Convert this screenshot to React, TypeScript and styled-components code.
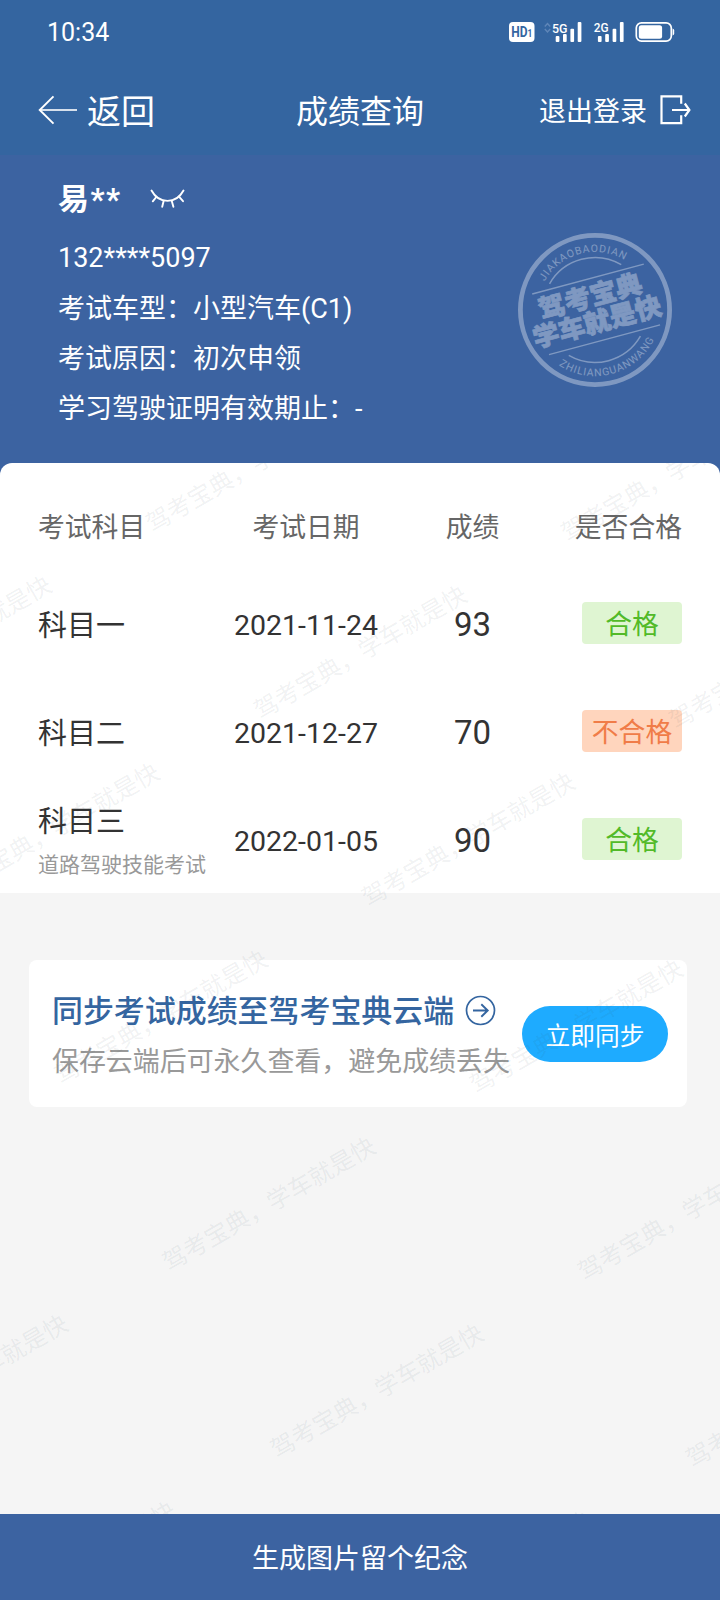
import React from "react";
import styled, { createGlobalStyle } from "styled-components";

const GlobalStyle = createGlobalStyle`
  * { box-sizing: border-box; }
  body {
    margin: 0;
    background: #f5f5f5;
    font-family: Roboto, "Noto Sans CJK SC", sans-serif;
  }
`;

const Screen = styled.div`
  width: 720px;
  height: 1600px;
  display: flex;
  flex-direction: column;
  overflow: hidden;
  background: #f5f5f5;
`;

const TopBar = styled.header`
  height: 155px;
  flex: none;
  background: #3465a0;
  color: #fff;
`;

const StatusBar = styled.div`
  height: 64px;
  padding: 0 45px 0 47px;
  display: flex;
  align-items: center;
  justify-content: space-between;
`;

const Clock = styled.span`
  padding-top: 1px;
  font-size: 25px;
  line-height: 31px;
`;

const NavBar = styled.nav`
  height: 92px;
  padding: 0 29px 0 38px;
  display: grid;
  grid-template-columns: 1fr auto 1fr;
  align-items: center;
`;

const NavAction = styled.div<{ $end?: boolean; $size: number; $gap: number }>`
  display: flex;
  align-items: center;
  justify-content: ${(p) => (p.$end ? "flex-end" : "flex-start")};
  gap: ${(p) => p.$gap}px;
  font-size: ${(p) => p.$size}px;
  line-height: 40px;

  svg { margin-bottom: 1px; }
`;

const NavLabel = styled.span`
  padding-top: 3px;
`;

const NavTitle = styled.h1`
  margin: 0 0 0 -9px;
  padding-top: 4px;
  font-size: 32px;
  font-weight: 400;
  line-height: 40px;
`;

const Hero = styled.section`
  height: 308px;
  flex: none;
  display: flex;
  justify-content: space-between;
  padding: 10px 48px 0 58px;
  background: #3c63a1;
  color: #fff;
`;

const NameRow = styled.div`
  height: 68px;
  display: flex;
  align-items: center;
  gap: 28px;

  svg { margin-bottom: 1px; }
`;

const Name = styled.span`
  font-size: 31px;
  font-weight: 700;
  line-height: 41px;
  letter-spacing: 1.5px;
`;

const Phone = styled.div`
  height: 51px;
  font-size: 27px;
  line-height: 50px;
`;

const InfoLine = styled.div`
  height: 50px;
  font-size: 27px;
  line-height: 50px;
  white-space: nowrap;
`;

const StampSvg = styled.svg`
  flex: none;
  margin-top: 68px;
`;

const Body = styled.main`
  position: relative;
  flex: 1;
  overflow: hidden;
  background: linear-gradient(#3c63a1 0 20px, #f5f5f5 20px);
`;

const ScoreCard = styled.section`
  height: 430px;
  padding: 21px 38px 0;
  border-radius: 12px 12px 0 0;
  background: #fff;
`;

const Row = styled.div<{ $head?: boolean }>`
  height: ${(p) => (p.$head ? 87 : 108)}px;
  display: grid;
  grid-template-columns: 168px 200px 133px 143px;
  align-items: center;
  justify-items: center;
  color: ${(p) => (p.$head ? "#666" : "#333")};
  font-size: ${(p) => (p.$head ? 26.8 : 29)}px;
  line-height: 40px;
  white-space: nowrap;

  > :first-child { justify-self: start; }
  > :last-child { justify-self: end; }
`;

const Subject = styled.div<{ $noted: boolean }>`
  display: flex;
  flex-direction: column;
  gap: 3px;
  padding-top: ${(p) => (p.$noted ? 4 : 2)}px;
`;

const SubjectNote = styled.span`
  color: #999;
  font-size: 21px;
`;

const ExamDate = styled.span`
  padding-top: 1px;
  font-size: 28.5px;
`;

const Score = styled.span`
  font-size: 33px;
`;

const Badge = styled.span<{ $pass: boolean }>`
  width: 100px;
  height: 42px;
  margin-bottom: 4px;
  border-radius: 4px;
  text-align: center;
  font-size: 26.8px;
  line-height: 46px;
  background: ${(p) => (p.$pass ? "#dff5d2" : "#ffd5bd")};
  color: ${(p) => (p.$pass ? "#52ba28" : "#f07c48")};
`;

const SyncCard = styled.section`
  width: 658px;
  height: 147px;
  margin: 67px 0 0 29px;
  padding: 0 19px 0 23px;
  display: flex;
  align-items: center;
  justify-content: space-between;
  border-radius: 8px;
  background: #fff;
  white-space: nowrap;
`;

const SyncText = styled.div`
  padding-top: 6px;
`;

const SyncTitle = styled.div`
  display: flex;
  align-items: center;
  gap: 11px;
  color: #3465a0;
  font-size: 30.95px;
  font-weight: 500;
  line-height: 50px;

  svg { margin-bottom: 2px; }
`;

const SyncNote = styled.div`
  color: #999;
  font-size: 26.95px;
  line-height: 50px;
`;

const SyncButton = styled.button`
  width: 146px;
  height: 56px;
  flex: none;
  padding: 0;
  border: 0;
  border-radius: 28px;
  background: #1eabff;
  color: #fff;
  font: 24.7px/62px Roboto, "Noto Sans CJK SC", sans-serif;
`;

const WatermarkLayer = styled.div`
  position: absolute;
  inset: 0;
  overflow: hidden;
  pointer-events: none;
`;

const WatermarkGrid = styled.div`
  position: absolute;
  top: 2px;
  left: 2px;
  display: grid;
  grid-template-columns: repeat(4, 355px);
  grid-auto-rows: 216px;
  transform-origin: 0 0;
  transform: rotate(-30deg) translate(-614px, -102px);
  color: rgba(50, 75, 85, 0.08);
  font-size: 24.1px;
  line-height: 24px;
  white-space: nowrap;
`;

const BottomBar = styled.footer`
  height: 86px;
  flex: none;
  background: #3c63a1;
  color: #fff;
  text-align: center;
  font-size: 27px;
  line-height: 90px;
`;

const SignalBars = ({ x }: { x: number }) => (
  <g>
    <rect x={x} y="36" width="3.7" height="6" rx="1" />
    <rect x={x + 7.3} y="34" width="3.7" height="8" rx="1" />
    <rect x={x + 14.7} y="28.7" width="3.7" height="13.3" rx="1" />
    <rect x={x + 22} y="22" width="3.7" height="20" rx="1" />
  </g>
);

const StatusIcons = () => (
  <svg width="167" height="24" viewBox="508 20 167 24" fill="#fff" fontFamily="Roboto, sans-serif">
    <rect x="509" y="22" width="25.5" height="20" rx="4" />
    <text x="511.2" y="37.2" fill="#3465a0" fontWeight="700" fontSize="14.5" textLength="21" lengthAdjust="spacingAndGlyphs">
      HD<tspan fontSize="10">1</tspan>
    </text>
    <path d="M544.8 26.5l2.7-3 2.7 3M544.8 29l2.7 3 2.7-3" fill="none" stroke="#5f86b8" strokeWidth="1.4" />
    <text x="552" y="32.8" fontSize="13" fontWeight="500" textLength="15.5" lengthAdjust="spacingAndGlyphs">5G</text>
    <SignalBars x={555.7} />
    <text x="593.8" y="32.3" fontSize="12.5" fontWeight="500" textLength="14.8" lengthAdjust="spacingAndGlyphs">2G</text>
    <SignalBars x={597.9} />
    <rect x="636.3" y="22.8" width="35" height="18.4" rx="5.2" fill="none" stroke="#fff" strokeWidth="1.7" />
    <rect x="638.8" y="25.3" width="23.3" height="13.4" rx="2.5" />
    <path d="M672.6 28.5q1.6.3 1.6 2v3q0 1.7-1.6 2z" />
  </svg>
);

const BackArrow = () => (
  <svg width="40" height="32" viewBox="38 93 40 32" fill="none" stroke="#fff" strokeWidth="1.9">
    <path d="M53.5 95.3L39.7 109l13.8 13.7" />
    <path d="M40 109h37" opacity="0.8" />
  </svg>
);

const ExitIcon = () => (
  <svg width="32" height="32" viewBox="659 93 32 32" fill="none" stroke="#fff" strokeWidth="2.2">
    <path d="M681.2 102.8v-7.5h-19.7v26.9h19.7v-8" />
    <path d="M672 109h17.5M684.8 102.5l4.6 6.5-4.6 6.5" />
  </svg>
);

const ClosedEye = () => (
  <svg width="36" height="22" viewBox="150 187 36 22" fill="none" stroke="#fff" strokeWidth="1.9" strokeLinecap="round">
    <path d="M151.5 189.5C159 203.3 176 203.3 183.5 189.5" />
    <path d="M156.3 196l-3.5 4.3M163.7 199.8l-1.5 6M171.7 199.8l1.7 6M179 195.7l4 4.5" />
  </svg>
);

const CircleArrow = () => (
  <svg width="31" height="31" viewBox="0 0 31 31" fill="none" stroke="#3465a0" strokeWidth="1.7">
    <circle cx="15.5" cy="15.5" r="14" />
    <path d="M8 15.5h14.500M16.300 9.300l6.400 6.200-6.400 6.200" strokeWidth="1.9" />
  </svg>
);

const Stamp = () => (
  <StampSvg width="154" height="154" viewBox="-77 -77 154 154" opacity="0.34">
    <defs>
      <path id="arc-top" d="M-53.6-22.2A58 58 0 0 1 53.6-22.2" />
      <path id="arc-bottom" d="M-61 25.3A66 66 0 0 0 61 25.3" />
    </defs>
    <circle r="74.6" fill="none" stroke="#fff" strokeWidth="4.8" />
    <g transform="rotate(-15)" fill="#fff">
      <g fill="none" stroke="#fff" strokeWidth="1.5">
        <path d="M-37.1-37.1A52.5 52.5 0 0 1 37.1-37.1M-37.1 37.1A52.5 52.5 0 0 0 37.1 37.1" />
        <path d="M-56.5-31.7h115.5M-56 31.2h115" />
      </g>
      <g fontFamily="Noto Sans CJK SC, sans-serif" fontWeight="900" fontSize="26" stroke="#fff" strokeWidth="0.7">
        <text x="-54" y="-5" textLength="106" lengthAdjust="spacingAndGlyphs">驾考宝典</text>
        <text x="-67" y="21.5" textLength="132" lengthAdjust="spacingAndGlyphs">学车就是快</text>
      </g>
      <g fontFamily="Roboto, sans-serif" fontSize="10.5" textAnchor="middle">
        <text textLength="92"><textPath href="#arc-top" startOffset="50%">JIAKAOBAODIAN</textPath></text>
        <text textLength="111"><textPath href="#arc-bottom" startOffset="50%">ZHILIANGUANWANG</textPath></text>
      </g>
    </g>
  </StampSvg>
);

const results = [
  { subject: "科目一", date: "2021-11-24", score: 93, pass: true },
  { subject: "科目二", date: "2021-12-27", score: 70, pass: false },
  { subject: "科目三", note: "道路驾驶技能考试", date: "2022-01-05", score: 90, pass: true },
];

export default function App() {
  return (
    <Screen>
      <GlobalStyle />
      <TopBar>
        <StatusBar>
          <Clock>10:34</Clock>
          <StatusIcons />
        </StatusBar>
        <NavBar>
          <NavAction $size={34} $gap={9}>
            <BackArrow />
            <NavLabel>返回</NavLabel>
          </NavAction>
          <NavTitle>成绩查询</NavTitle>
          <NavAction $end $size={27} $gap={12}>
            <NavLabel>退出登录</NavLabel>
            <ExitIcon />
          </NavAction>
        </NavBar>
      </TopBar>
      <Hero>
        <div>
          <NameRow>
            <Name>易**</Name>
            <ClosedEye />
          </NameRow>
          <Phone>132****5097</Phone>
          <InfoLine>考试车型：小型汽车(C1)</InfoLine>
          <InfoLine>考试原因：初次申领</InfoLine>
          <InfoLine>学习驾驶证明有效期止：-</InfoLine>
        </div>
        <Stamp />
      </Hero>
      <Body>
        <ScoreCard>
          <Row $head>
            <span>考试科目</span>
            <span>考试日期</span>
            <span>成绩</span>
            <span>是否合格</span>
          </Row>
          {results.map((r) => (
            <Row key={r.subject}>
              <Subject $noted={!!r.note}>
                <span>{r.subject}</span>
                {r.note && <SubjectNote>{r.note}</SubjectNote>}
              </Subject>
              <ExamDate>{r.date}</ExamDate>
              <Score>{r.score}</Score>
              <Badge $pass={r.pass}>{r.pass ? "合格" : "不合格"}</Badge>
            </Row>
          ))}
        </ScoreCard>
        <SyncCard>
          <SyncText>
            <SyncTitle>
              同步考试成绩至驾考宝典云端
              <CircleArrow />
            </SyncTitle>
            <SyncNote>保存云端后可永久查看，避免成绩丢失</SyncNote>
          </SyncText>
          <SyncButton>立即同步</SyncButton>
        </SyncCard>
        <WatermarkLayer aria-hidden>
          <WatermarkGrid>
            {Array.from({ length: 28 }, (_, i) => (
              <span key={i}>驾考宝典，学车就是快</span>
            ))}
          </WatermarkGrid>
        </WatermarkLayer>
      </Body>
      <BottomBar>生成图片留个纪念</BottomBar>
    </Screen>
  );
}
